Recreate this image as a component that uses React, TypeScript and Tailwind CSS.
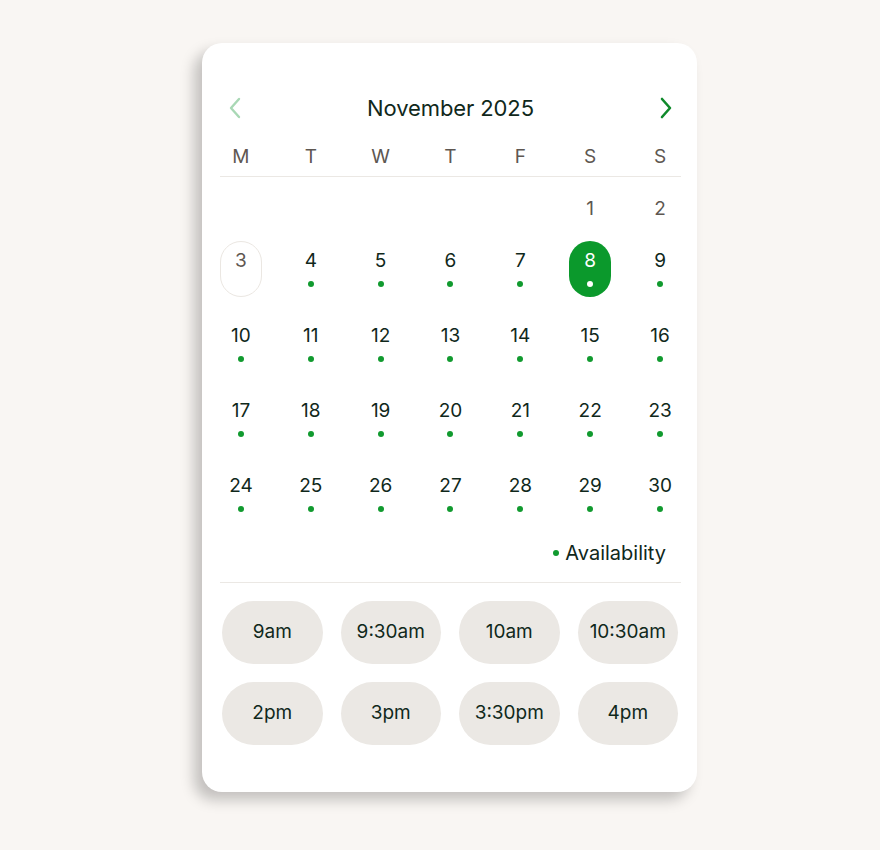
import React from "react";

const weekdays = ["M", "T", "W", "T", "F", "S", "S"];
const times = ["9am", "9:30am", "10am", "10:30am", "2pm", "3pm", "3:30pm", "4pm"];

type Day = { n: number | null; dot: boolean; state?: "today" | "selected" | "muted" };

function buildDays(): Day[] {
  const d: Day[] = [];
  for (let i = 0; i < 5; i++) d.push({ n: null, dot: false });
  d.push({ n: 1, dot: false, state: "muted" });
  d.push({ n: 2, dot: false, state: "muted" });
  d.push({ n: 3, dot: false, state: "today" });
  for (let i = 4; i <= 30; i++) d.push({ n: i, dot: true, state: i === 8 ? "selected" : undefined });
  return d;
}

export default function App() {
  const days = buildDays();
  return (
    <div
      className="min-h-[850px] w-full bg-[#f9f6f3] pl-[202px] pt-[43px]"
      style={{ fontFamily: "Inter, 'Liberation Sans', sans-serif" }}
    >
      <div className="w-[495px] rounded-[20px] bg-white pl-[18px] pr-[16px] pt-[50px] pb-[47px] shadow-[-8px_8px_14px_rgba(0,0,0,0.22)]">
        {/* Header */}
        <div className="flex h-[30px] items-center justify-between px-[8px]">
          <svg width="14" height="22" viewBox="0 0 14 22" fill="none">
            <path d="M11 2 L3 11 L11 20" stroke="#a9d8b5" strokeWidth="2.4" strokeLinecap="round" strokeLinejoin="round" />
          </svg>
          <div className="text-[22px] leading-[30px] text-[#10281b] tracking-[-0.1px]">November 2025</div>
          <svg width="14" height="22" viewBox="0 0 14 22" fill="none">
            <path d="M3 2 L11 11 L3 20" stroke="#0f8a2b" strokeWidth="2.6" strokeLinecap="round" strokeLinejoin="round" />
          </svg>
        </div>

        {/* Weekdays */}
        <div className="mt-[22px] grid grid-cols-7 gap-x-[28px] pb-[7px] border-b border-[#ebe8e4]">
          {weekdays.map((w, i) => (
            <div key={i} className="text-center text-[19px] leading-[24px] text-[#5e5751]">
              {w}
            </div>
          ))}
        </div>

        {/* Days */}
        <div className="mt-[12px] grid grid-cols-7 gap-x-[28px] gap-y-[19px]">
          {days.map((d, i) => {
            if (d.n === null) return <div key={i} />;
            const isSel = d.state === "selected";
            const isToday = d.state === "today";
            const muted = d.state === "muted" || isToday;
            return (
              <div
                key={i}
                className={
                  "flex flex-col items-center rounded-full " +
                  (d.state === "muted" ? "h-[33px] " : "h-[56px] ") +
                  (isSel ? "bg-[#0b992c] " : "") +
                  (isToday ? "border-[1.5px] border-[#ebe7e2] " : "")
                }
              >
                <span
                  className={
                    "pt-[8px] text-[19px] leading-[24px] " +
                    (isSel ? "text-white" : muted ? "text-[#5e5751]" : "text-[#10281b]")
                  }
                  style={isToday ? { paddingTop: 6.5 } : undefined}
                >
                  {d.n}
                </span>
                {d.dot && (
                  <span className={"mt-[8px] h-[6px] w-[6px] rounded-full " + (isSel ? "bg-white" : "bg-[#119a2f]")} />
                )}
              </div>
            );
          })}
        </div>

        {/* Legend */}
        <div className="mt-[19px] flex h-[24px] items-center justify-end pr-[15px]">
          <span className="mr-[6px] h-[6px] w-[6px] rounded-full bg-[#119a2f]" />
          <span className="text-[20px] leading-[24px] text-[#10281b]">Availability</span>
        </div>

        <div className="mt-[17px] border-t border-[#ebe8e4]" />

        {/* Times */}
        <div className="mt-[18px] grid grid-cols-4 gap-x-[18px] gap-y-[18px] pl-[2px] pr-[3px]">
          {times.map((t) => (
            <button
              key={t}
              className="flex h-[63px] items-center justify-center rounded-full bg-[#ebe8e4] text-[19px] text-[#10281b]"
            >
              {t}
            </button>
          ))}
        </div>
      </div>
    </div>
  );
}
